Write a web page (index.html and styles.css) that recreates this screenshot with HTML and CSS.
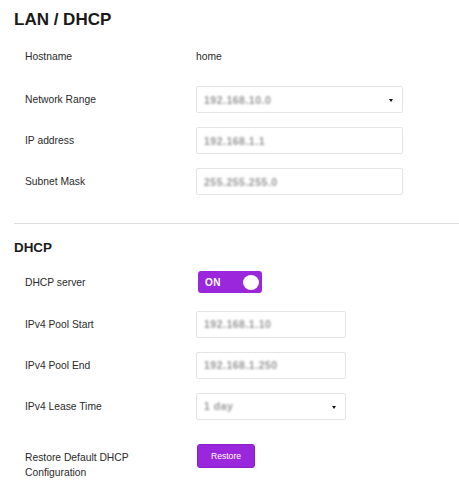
FILE: index.html
```html
<!DOCTYPE html>
<html>
<head>
<meta charset="utf-8">
<link rel="stylesheet" href="styles.css">
</head>
<body>
<div class="page">
  <h1 class="title">LAN / DHCP</h1>
  <div class="rows">
    <div class="row row-host">
      <div class="label">Hostname</div>
      <div class="value">home</div>
    </div>
    <div class="row">
      <div class="label">Network Range</div>
      <div class="field wide select"><span class="blur">192.168.10.0</span><span class="caret"></span></div>
    </div>
    <div class="row">
      <div class="label">IP address</div>
      <div class="field wide"><span class="blur">192.168.1.1</span></div>
    </div>
    <div class="row">
      <div class="label">Subnet Mask</div>
      <div class="field wide"><span class="blur">255.255.255.0</span></div>
    </div>
  </div>
  <hr class="divider">
  <h2 class="subtitle">DHCP</h2>
  <div class="rows">
    <div class="row">
      <div class="label">DHCP server</div>
      <div class="toggle"><span class="toggle-text">ON</span><span class="knob"></span></div>
    </div>
    <div class="row row-pool">
      <div class="label">IPv4 Pool Start</div>
      <div class="field narrow"><span class="blur">192.168.1.10</span></div>
    </div>
    <div class="row">
      <div class="label">IPv4 Pool End</div>
      <div class="field narrow"><span class="blur">192.168.1.250</span></div>
    </div>
    <div class="row">
      <div class="label">IPv4 Lease Time</div>
      <div class="field narrow select"><span class="blur">1 day</span><span class="caret"></span></div>
    </div>
    <div class="row row-restore">
      <div class="label label-two">Restore Default DHCP<br>Configuration</div>
      <button class="btn">Restore</button>
    </div>
  </div>
</div>
</body>
</html>
```
FILE: styles.css
```css
html, body {
  margin: 0;
  padding: 0;
  background: #fff;
}
body {
  font-family: "Liberation Sans", Arial, sans-serif;
  color: #333;
}
.page {
  padding-left: 14px;
  width: 445px;
}
.title {
  margin: 10px 0 0 0;
  font-size: 17px;
  line-height: 20px;
  font-weight: bold;
  color: #1a1a1a;
}
.rows {
  display: flex;
  flex-direction: column;
  gap: 14px;
  padding-left: 11px;
}
.rows:first-of-type {
  margin-top: 12.5px;
}
.row {
  display: grid;
  grid-template-columns: 171px 1fr;
  align-items: center;
  min-height: 27px;
}
.row-host {
  margin-bottom: 2.5px;
}
.label {
  font-size: 10.3px;
  line-height: 15px;
  color: #2a2a2a;
}
.value {
  font-size: 10.3px;
  color: #2a2a2a;
}
.field {
  box-sizing: border-box;
  height: 27px;
  border: 1px solid #e4e4e4;
  border-radius: 2px;
  display: flex;
  align-items: center;
  padding-left: 7px;
  position: relative;
  background: #fff;
}
.wide { width: 207px; }
.narrow { width: 150px; }
.blur {
  font-size: 10.5px;
  font-weight: bold;
  color: #999;
  filter: blur(1.3px);
  letter-spacing: 0.5px;
}
.caret {
  position: absolute;
  right: 9px;
  top: 12px;
  width: 0;
  height: 0;
  border-left: 2.5px solid transparent;
  border-right: 2.5px solid transparent;
  border-top: 3px solid #111;
}
.divider {
  border: 0;
  border-top: 1px solid #dedede;
  margin: 28px 0 0 0;
  height: 0;
}
.subtitle {
  margin: 16px 0 12.5px 0;
  font-size: 13.4px;
  line-height: 16px;
  font-weight: bold;
  color: #1a1a1a;
}
.row-pool {
  margin-top: 1px;
}
.toggle {
  box-sizing: border-box;
  width: 64px;
  height: 22px;
  margin-left: 2px;
  border-radius: 3px;
  background: #9b27dd;
  display: flex;
  align-items: center;
  justify-content: space-between;
  padding: 0 3px 0 7px;
}
.toggle-text {
  color: #fff;
  font-size: 10px;
  font-weight: bold;
  letter-spacing: 0.4px;
}
.knob {
  width: 16px;
  height: 15px;
  border-radius: 50%;
  background: #fff;
}
.row-restore {
  align-items: start;
  margin-top: 10px;
}
.label-two {
  padding-top: 6.5px;
}
.btn {
  box-sizing: border-box;
  width: 58px;
  height: 24px;
  margin-left: 1px;
  border: 1px solid #8a1fc9;
  border-radius: 3px;
  background: #9b27dd;
  color: #fff;
  font-family: "Liberation Sans", Arial, sans-serif;
  font-size: 8.6px;
  padding: 0;
}
```
